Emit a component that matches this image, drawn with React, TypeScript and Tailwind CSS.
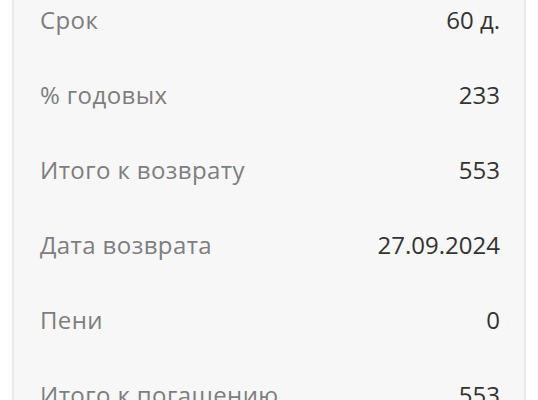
const rows = [
  { label: 'Срок', value: '60 д.' },
  { label: '% годовых', value: '233' },
  { label: 'Итого к возврату', value: '553' },
  { label: 'Дата возврата', value: '27.09.2024' },
  { label: 'Пени', value: '0' },
  { label: 'Итого к погашению', value: '553' },
];

export default function App() {
  return (
    <div className="w-[538px] h-[400px] overflow-hidden bg-white px-[12px]" style={{ fontFamily: '"Open Sans", sans-serif' }}>
      <div className="-mt-[18px] border-x-2 border-[#e9e9e9] bg-[#f7f7f7] pl-[26px] pr-[24px]">
        {rows.map((row) => (
          <div key={row.label} className="flex h-[75px] items-center justify-between text-[24px] leading-none">
            <span className="tracking-[0.4px] text-[#7e7e7e]">{row.label}</span>
            <span className="text-[#333333]">{row.value}</span>
          </div>
        ))}
      </div>
    </div>
  );
}
